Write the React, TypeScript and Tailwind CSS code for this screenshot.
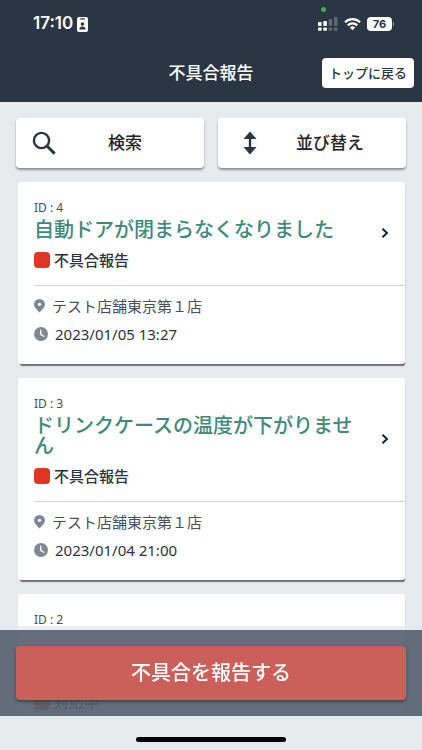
interface Report {
  id: number
  title?: string
  status: string
  store?: string
  date?: string
}

const reports: Report[] = [
  { id: 4, title: "自動ドアが閉まらなくなりました", status: "不具合報告", store: "テスト店舗東京第１店", date: "2023/01/05 13:27" },
  { id: 3, title: "ドリンクケースの温度が下がりません", status: "不具合報告", store: "テスト店舗東京第１店", date: "2023/01/04 21:00" },
  { id: 2, status: "対応中" },
]

function StatusBar() {
  return (
    <div className="relative flex h-12 items-center justify-between pr-7 pl-8">
      <div className="flex items-center gap-1 pl-px font-['Inter',sans-serif] text-[17px] font-semibold">
        <span>17:10</span>
        <svg className="h-[15px] w-[11px]" viewBox="0 0 11 15">
          <rect width="11" height="15" rx="2" fill="#fff" />
          <rect x="3" y="1.3" width="5" height="1.2" rx="0.6" fill="#2b3644" />
          <circle cx="5.5" cy="7" r="1.8" fill="#2b3644" />
          <path d="M2.3 12.4c0-2.1 1.4-3 3.2-3s3.2.9 3.2 3z" fill="#2b3644" />
        </svg>
      </div>
      <div className="flex items-center gap-1.5">
        <svg className="h-3.5 w-5" viewBox="0 0 20 14" fill="#fff">
          <rect y="5" width="3.6" height="4" rx="0.8" />
          <rect x="5.3" y="4" width="3.6" height="5" rx="0.8" />
          <rect x="10.6" y="2" width="3.6" height="7" rx="0.8" opacity="0.25" />
          <rect x="15.9" y="0" width="3.6" height="9" rx="0.8" opacity="0.25" />
          <rect y="10.5" width="3.6" height="3.3" rx="0.8" />
          <rect x="5.3" y="10.5" width="3.6" height="3.3" rx="0.8" />
          <rect x="10.6" y="10.5" width="3.6" height="3.3" rx="0.8" opacity="0.25" />
          <rect x="15.9" y="10.5" width="3.6" height="3.3" rx="0.8" opacity="0.25" />
        </svg>
        <svg className="h-3.5 w-[17px]" viewBox="0 0 17 14" fill="none" stroke="#fff" strokeWidth="2.3">
          <path d="M1 5.2a10.7 10.7 0 0 1 15 0" />
          <path d="M3.8 8.4a6.7 6.7 0 0 1 9.4 0" />
          <path d="M8.5 13.2 5.8 10.5a3.8 3.8 0 0 1 5.4 0z" fill="#fff" stroke="none" />
        </svg>
        <div className="flex items-center gap-px">
          <span className="w-[25px] rounded-[4px] bg-white text-center font-['Inter',sans-serif] text-[11px] leading-[14px] font-bold text-[#2b3644]">
            76
          </span>
          <span className="h-1 w-px rounded-r bg-white/60" />
        </div>
      </div>
      <span className="absolute top-[7px] right-24 h-[5px] w-[5px] rounded-full bg-[#4ca65f]" />
    </div>
  )
}

function PinIcon() {
  return (
    <svg className="h-3.5 w-[11px] shrink-0" viewBox="0 0 11 14">
      <path d="M5.5 0A5.4 5.4 0 0 0 0 5.3C0 8.6 3.6 11.3 5.5 13.6 7.4 11.3 11 8.6 11 5.3A5.4 5.4 0 0 0 5.5 0z" fill="#808993" />
      <circle cx="5.5" cy="5.3" r="1.6" fill="#fff" />
    </svg>
  )
}

function ClockIcon() {
  return (
    <svg className="h-3.5 w-3.5 shrink-0" viewBox="0 0 14 14">
      <circle cx="7" cy="7" r="7" fill="#808993" />
      <path d="M6.7 3.2v4.2l3 1.9" fill="none" stroke="#fff" strokeWidth="1.3" strokeLinecap="round" strokeLinejoin="round" />
    </svg>
  )
}

function ReportCard({ report }: { report: Report }) {
  return (
    <article className="rounded-[3px] bg-white pt-4 pb-[18px] pl-4 shadow-[1px_3px_1px_-1px_rgba(60,60,70,0.7)]">
      <a href={`#report-${report.id}`} className="flex items-center justify-between border-b border-[#d3d5d8] pr-4 pb-[17px]">
        <div className="pr-3">
          <p className="text-xs leading-5 text-[#454c57]">ID : {report.id}</p>
          {report.title ? (
            <h2 className="mt-0.5 text-xl leading-5 font-medium text-[#3f8a7c]">{report.title}</h2>
          ) : (
            <div className="h-13" />
          )}
          <p className="mt-3 flex items-center gap-1 text-[15px] leading-4 font-medium">
            <span className="h-4 w-4 shrink-0 rounded-[4px] bg-[#e03524]" />
            {report.status}
          </p>
        </div>
        {report.title && (
          <svg className="h-2.5 w-2 shrink-0" viewBox="0 0 8 10" fill="none" stroke="#1d2433" strokeWidth="2">
            <path d="M1.5 0.7 6 5 1.5 9.3" />
          </svg>
        )}
      </a>
      {report.store && (
        <p className="mt-2 flex items-center gap-[7px] text-[15px] leading-6 text-[#4a505b]">
          <PinIcon />
          {report.store}
        </p>
      )}
      {report.date && (
        <p className="mt-1 flex items-center gap-[7px] text-[15px] leading-6">
          <ClockIcon />
          <time>{report.date}</time>
        </p>
      )}
    </article>
  )
}

export default function App() {
  return (
    <div className="flex h-screen flex-col overflow-hidden bg-[#e6eaed] font-['Noto_Sans','Noto_Sans_CJK_JP',sans-serif] text-[#2b3342]">
      <header className="shrink-0 bg-[#2b3644] text-white">
        <StatusBar />
        <div className="grid grid-cols-[1fr_auto_1fr] items-center px-2 pt-2.5 pb-3.5">
          <h1 className="col-start-2 text-[17px] leading-6 font-medium">不具合報告</h1>
          <button className="justify-self-end rounded-[4px] bg-white px-[7px] py-1 text-[13px] leading-[22px] font-medium text-[#2b3342]">
            トップに戻る
          </button>
        </div>
      </header>

      <main className="min-h-0 flex-1 overflow-hidden px-4 pt-4">
        <div className="grid grid-cols-2 gap-3.5">
          <button className="flex h-[50px] items-center rounded-[4px] bg-white pr-2.5 pl-4 shadow-[0_2px_2px_rgba(60,60,70,0.5)]">
            <svg className="h-6 w-6 shrink-0" viewBox="0 0 24 24" fill="none" stroke="#2b3644" strokeWidth="2.4">
              <circle cx="9.5" cy="9.5" r="7.6" />
              <path d="m15 15 7.6 7.6" strokeWidth="3" />
            </svg>
            <span className="flex-1 text-[17px] font-medium text-[#222]">検索</span>
          </button>
          <button className="flex h-[50px] items-center rounded-[4px] bg-white pr-2 pl-5 shadow-[0_2px_2px_rgba(60,60,70,0.5)]">
            <svg className="h-6 w-6 shrink-0" viewBox="0 0 24 24" fill="#2b3644">
              <path d="M12 0.5 18.5 8h-13zM12 23.5 18.5 16h-13z" />
              <path d="M10.8 6h2.4v12h-2.4z" />
            </svg>
            <span className="flex-1 text-[17px] font-medium text-[#222]">並び替え</span>
          </button>
        </div>

        <div className="mt-3.5 flex flex-col gap-3.5 pr-px pl-0.5">
          {reports.map((report) => (
            <ReportCard key={report.id} report={report} />
          ))}
        </div>
      </main>

      <footer className="fixed inset-x-0 bottom-0">
        <div className="bg-[#e6eaed]/75 pt-1">
          <div className="bg-[#2b3648]/70 p-4">
            <button className="h-[54px] w-full rounded-[4px] bg-[#cb5f5a] text-xl font-medium text-white shadow-[0_2px_3px_rgba(30,30,40,0.5)]">
              不具合を報告する
            </button>
          </div>
        </div>
        <div className="flex h-[34px] items-end justify-center bg-[#e6eaed] pb-2">
          <span className="h-[5px] w-[150px] rounded-full bg-black" />
        </div>
      </footer>
    </div>
  )
}
